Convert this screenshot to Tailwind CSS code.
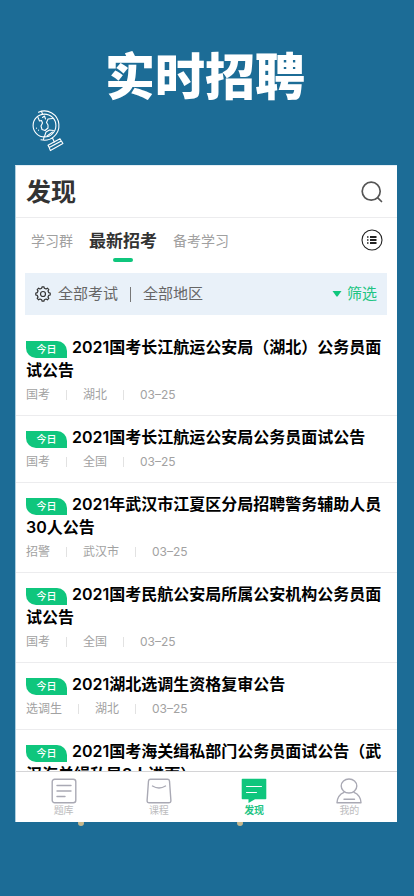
<!DOCTYPE html>
<html lang="zh-CN">
<head>
<meta charset="utf-8">
<meta name="viewport" content="width=device-width, initial-scale=1">
<title>实时招聘</title>
<script src="https://cdn.jsdelivr.net/npm/@tailwindcss/browser@4"></script>
</head>
<body class="flex h-screen flex-col bg-[#1c6c96] font-['Inter','Noto_Sans_CJK_SC',sans-serif]">
  <header class="relative h-[165px] shrink-0 pt-[47px] pr-1">
    <h1 class="text-center text-[50px] leading-[60px] font-black text-white">实时招聘</h1>
    <svg class="absolute top-[108px] left-[30px] h-[44px] w-[36px] fill-none stroke-white" viewBox="0 0 36 44" stroke-width="1.1" stroke-linecap="round" stroke-linejoin="round" aria-hidden="true">
      <circle cx="14.500" cy="17.500" r="11.400"/>
      <path d="M8.500 4.200A14.600 14.600 0 1 1 11 31.800"/>
      <path d="M11.500 3.500l1 2.500M14 29l-.5 2.500"/>
      <path d="M8 9.500l1.500 3.500 2-.5 1 2.500-1.500 3 1 3.500 3 1 3-2.500v-3l-1.500-2.500 1.500-3.500 4.500-.5M12.500 9.500l2-1.500 1 3"/>
      <path d="M14.500 28.500l1.500-4.500 3.500-2 4 .5M17 28l5.500-4"/>
      <path d="M6.500 20v.3M8.500 22v.3M22.500 30l1.800 4"/>
      <path d="M18 37.200l12-6.400 1.200 2.200-12 6.600zM19.200 39.600l12.200-6.600 1.500 2.600-12.500 7z"/>
    </svg>
  </header>

  <div class="relative mr-[17px] mb-[74px] ml-[15px] min-h-0 flex-1">
    <span class="absolute -bottom-1 left-[63px] size-1.5 rounded-full bg-[#c9b88c]"></span>
    <span class="absolute -bottom-1 left-[222px] size-1.5 rounded-full bg-[#c9b88c]"></span>

    <main class="relative flex h-full flex-col border-t border-l border-t-[#e3eef5] border-l-[#b0d0e0] bg-white">
      <div class="flex h-[52px] shrink-0 items-center justify-between border-b border-[#ececee] pr-3.5 pl-[10px]">
        <h2 class="text-[25px] leading-8 font-semibold text-[#333]">发现</h2>
        <button type="button" aria-label="搜索">
          <svg class="size-[22px] fill-none stroke-[#555]" viewBox="0 0 22 22" stroke-width="1.700" stroke-linecap="round"><circle cx="10.200" cy="10.200" r="9"/><path d="M16.800 16.800l3.700 3.700"/></svg>
        </button>
      </div>

      <nav class="flex h-[55px] shrink-0 items-start justify-between pt-[11px] pr-3.5 pl-[15px]">
        <div class="flex gap-4 leading-6">
          <a href="#" class="text-sm leading-6 text-[#a0a0a0]">学习群</a>
          <a href="#" aria-current="page" class="flex flex-col items-center gap-[5px] text-[17px] leading-6 font-semibold text-[#333]">最新招考<span class="h-1 w-5 rounded-full bg-[#0fc67d]"></span></a>
          <a href="#" class="text-sm leading-6 text-[#a0a0a0]">备考学习</a>
        </div>
        <button type="button" aria-label="列表">
          <svg class="size-[22px]" viewBox="0 0 22 22" fill="none" stroke="#222"><circle cx="11" cy="11" r="10" stroke-width="1.100"/><path d="M9 8h6.500M9 11h6.500M9 14h6.500" stroke-width="1.900"/><path d="M6 8h1.500M6 11h1.500M6 14h1.500" stroke-width="1.500"/></svg>
        </button>
      </nav>

      <div class="mr-[10px] ml-[9px] flex h-[42px] shrink-0 items-center bg-[#e9f1f9] pr-[10px] pl-[10px] text-[15px] leading-6 text-[#666]">
        <svg class="mr-[7px] size-4 fill-none stroke-[#333]" viewBox="0 0 16 16" stroke-width="1.200" stroke-linejoin="round" aria-hidden="true">
          <path d="M6.700 2.200L7 .8h2l.3 1.400 1.800.8 1.300-.8 1.400 1.400-.8 1.300.8 1.800 1.400.3v2l-1.400.3-.8 1.800.8 1.300-1.400 1.400-1.300-.8-1.800.8L9 15.200H7l-.3-1.400-1.800-.8-1.300.8-1.400-1.400.8-1.300L2.200 9.300.8 9V7l1.400-.3.8-1.800-.8-1.300 1.400-1.400 1.300.8z"/><circle cx="8" cy="8" r="2.500"/>
        </svg>
        <button type="button">全部考试</button>
        <span class="mx-3 h-[15px] w-px bg-[#777]"></span>
        <button type="button">全部地区</button>
        <button type="button" class="ml-auto flex items-center gap-[5px] text-[#20c482]">
          <svg class="h-[6px] w-[10px]" viewBox="0 0 10 6" aria-hidden="true"><path d="M.5 0h9L5.700 5.300q-.7.700-1.400 0z" fill="#0fc67d"/></svg>筛选
        </button>
      </div>

      <ul class="mt-[11px] min-h-0 flex-1 overflow-hidden text-black">
        <li class="border-b border-[#ececee] pt-[10px] pr-[10px] pb-[11px] pl-[10px]">
          <a href="#" class="block text-base leading-[23px] font-semibold"><span class="mr-[5px] mb-px inline-block h-[17px] w-[41px] rounded-tr-[10px] rounded-bl-[10px] bg-[#0fc67d] text-center align-bottom text-[10px] leading-[17px] font-medium text-white">今日</span>2021国考长江航运公安局（湖北）公务员面试公告</a>
          <p class="mt-1 flex items-center gap-4 text-xs leading-[18px] text-[#a2a2a2]"><span>国考</span><i class="h-[10px] w-px bg-[#e2e2e2]"></i><span>湖北</span><i class="h-[10px] w-px bg-[#e2e2e2]"></i><time>03–25</time></p>
        </li>
        <li class="border-b border-[#ececee] pt-[10px] pr-[10px] pb-[11px] pl-[10px]">
          <a href="#" class="block text-base leading-[23px] font-semibold"><span class="mr-[5px] mb-px inline-block h-[17px] w-[41px] rounded-tr-[10px] rounded-bl-[10px] bg-[#0fc67d] text-center align-bottom text-[10px] leading-[17px] font-medium text-white">今日</span>2021国考长江航运公安局公务员面试公告</a>
          <p class="mt-1 flex items-center gap-4 text-xs leading-[18px] text-[#a2a2a2]"><span>国考</span><i class="h-[10px] w-px bg-[#e2e2e2]"></i><span>全国</span><i class="h-[10px] w-px bg-[#e2e2e2]"></i><time>03–25</time></p>
        </li>
        <li class="border-b border-[#ececee] pt-[10px] pr-[10px] pb-[11px] pl-[10px]">
          <a href="#" class="block text-base leading-[23px] font-semibold"><span class="mr-[5px] mb-px inline-block h-[17px] w-[41px] rounded-tr-[10px] rounded-bl-[10px] bg-[#0fc67d] text-center align-bottom text-[10px] leading-[17px] font-medium text-white">今日</span>2021年武汉市江夏区分局招聘警务辅助人员30人公告</a>
          <p class="mt-1 flex items-center gap-4 text-xs leading-[18px] text-[#a2a2a2]"><span>招警</span><i class="h-[10px] w-px bg-[#e2e2e2]"></i><span>武汉市</span><i class="h-[10px] w-px bg-[#e2e2e2]"></i><time>03–25</time></p>
        </li>
        <li class="border-b border-[#ececee] pt-[10px] pr-[10px] pb-[11px] pl-[10px]">
          <a href="#" class="block text-base leading-[23px] font-semibold"><span class="mr-[5px] mb-px inline-block h-[17px] w-[41px] rounded-tr-[10px] rounded-bl-[10px] bg-[#0fc67d] text-center align-bottom text-[10px] leading-[17px] font-medium text-white">今日</span>2021国考民航公安局所属公安机构公务员面试公告</a>
          <p class="mt-1 flex items-center gap-4 text-xs leading-[18px] text-[#a2a2a2]"><span>国考</span><i class="h-[10px] w-px bg-[#e2e2e2]"></i><span>全国</span><i class="h-[10px] w-px bg-[#e2e2e2]"></i><time>03–25</time></p>
        </li>
        <li class="border-b border-[#ececee] pt-[10px] pr-[10px] pb-[11px] pl-[10px]">
          <a href="#" class="block text-base leading-[23px] font-semibold"><span class="mr-[5px] mb-px inline-block h-[17px] w-[41px] rounded-tr-[10px] rounded-bl-[10px] bg-[#0fc67d] text-center align-bottom text-[10px] leading-[17px] font-medium text-white">今日</span>2021湖北选调生资格复审公告</a>
          <p class="mt-1 flex items-center gap-4 text-xs leading-[18px] text-[#a2a2a2]"><span>选调生</span><i class="h-[10px] w-px bg-[#e2e2e2]"></i><span>湖北</span><i class="h-[10px] w-px bg-[#e2e2e2]"></i><time>03–25</time></p>
        </li>
        <li class="pt-[10px] pr-[10px] pb-[11px] pl-[10px]">
          <a href="#" class="block text-base leading-[23px] font-semibold"><span class="mr-[5px] mb-px inline-block h-[17px] w-[41px] rounded-tr-[10px] rounded-bl-[10px] bg-[#0fc67d] text-center align-bottom text-[10px] leading-[17px] font-medium text-white">今日</span>2021国考海关缉私部门公务员面试公告（武汉海关缉私局8人进面）</a>
        </li>
      </ul>

      <nav class="grid h-[51px] shrink-0 grid-cols-4 border-t border-[#d4d4d6] pt-1.5 text-[10px] leading-3 text-[#bcbcbe]">
        <a href="#" class="flex flex-col items-center">
          <svg class="size-[26px] fill-none stroke-[#a9a9b4]" viewBox="0 0 26 26" stroke-width="1.400" stroke-linecap="round" aria-hidden="true"><rect x="1.200" y="1.200" width="23.600" height="23.600" rx="2.500"/><path d="M6 7.500h14M6 13h14M6 18.500h8"/></svg>题库
        </a>
        <a href="#" class="flex flex-col items-center">
          <svg class="size-[26px] fill-none stroke-[#a9a9b4]" viewBox="0 0 26 26" stroke-width="1.400" stroke-linecap="round" aria-hidden="true"><path d="M4.500 1.200h17q1.800 0 2 1.800l1.400 19.500q.1 2.300-2.200 2.300H3.300q-2.300 0-2.200-2.300L2.500 3q.2-1.800 2-1.800zM6.500 8q6.500 4 13 0"/></svg>课程
        </a>
        <a href="#" aria-current="page" class="flex flex-col items-center font-semibold text-[#20c482]">
          <svg class="size-[26px]" viewBox="0 0 26 26" aria-hidden="true"><path d="M1.500.7h23q.8 0 .8.800v19q0 .8-.8.800H14L7.500 25v-3.700h-6q-.8 0-.8-.8v-19q0-.8.8-.8z" fill="#0fc67d"/><path d="M5.500 8.500h15M5.500 14.500h10" stroke="#fff" stroke-width="1" stroke-linecap="round"/></svg>发现
        </a>
        <a href="#" class="flex flex-col items-center">
          <svg class="size-[26px] fill-none stroke-[#a9a9b4]" viewBox="0 0 26 26" stroke-width="1.400" stroke-linecap="round" stroke-linejoin="round" aria-hidden="true"><ellipse cx="13" cy="8" rx="7.800" ry="7"/><path d="M8 14.300C4 16 1.200 19.500 1 24.800h24c-.2-5.300-3-8.800-7-10.500M8 21.200h10.500"/></svg>我的
        </a>
      </nav>
    </main>
  </div>
</body>
</html>
